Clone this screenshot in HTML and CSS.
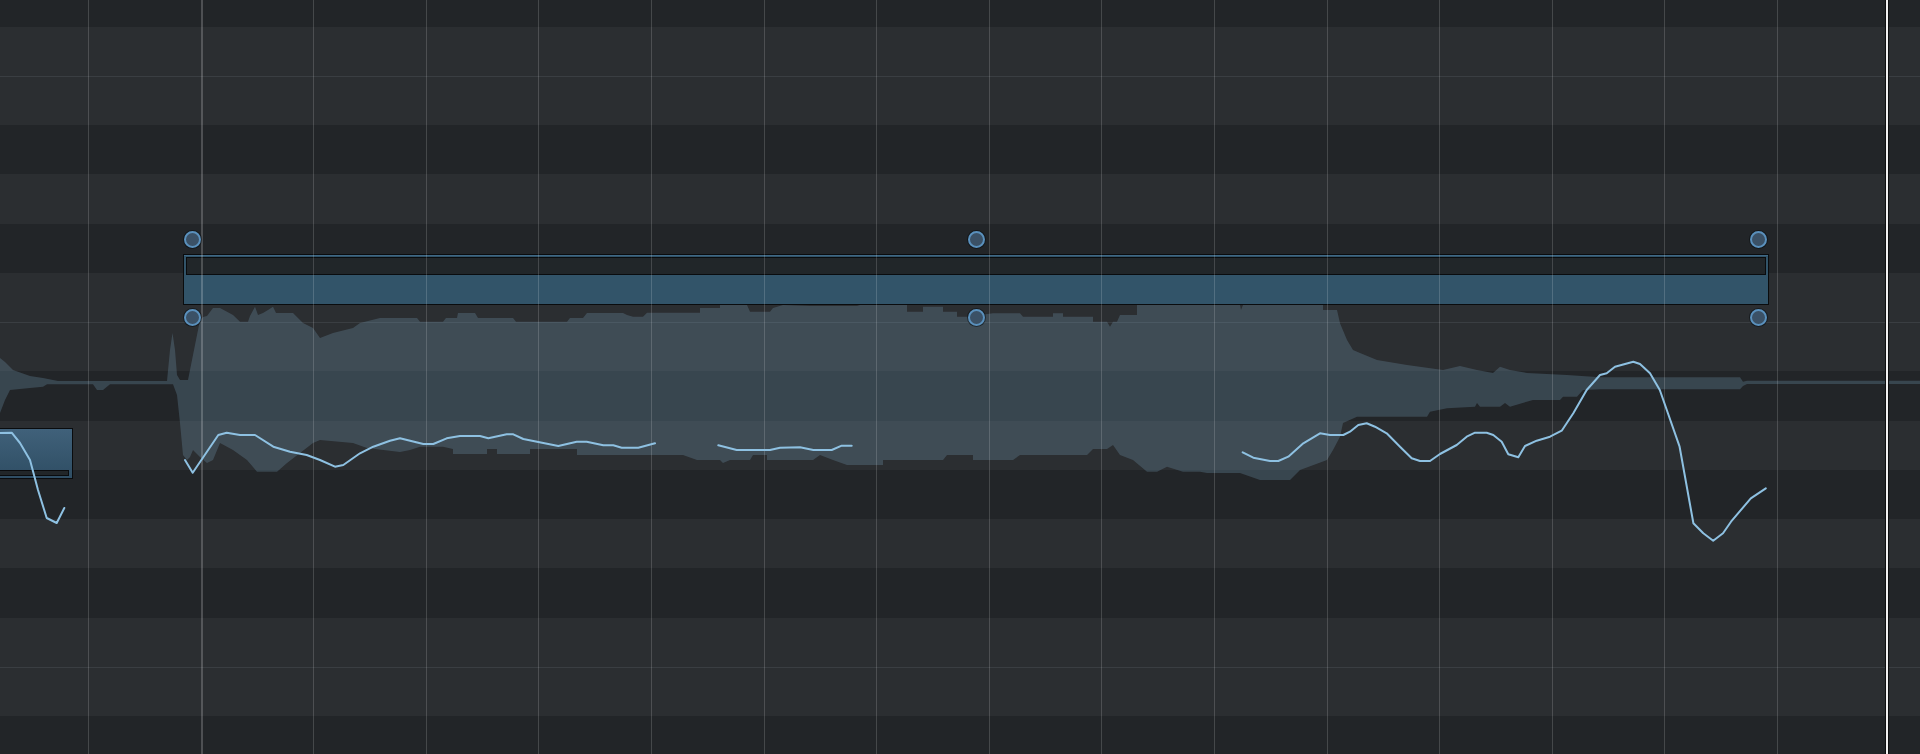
FILE: index.html
```html
<!DOCTYPE html>
<html>
<head>
<meta charset="utf-8">
<title>Pitch editor</title>
<link rel="stylesheet" href="styles.css">
</head>
<body>
<div class="editor">
  <div class="keys">
    <div class="row black first"></div>
    <div class="row white"></div>
    <div class="row white sep"></div>
    <div class="row black"></div>
    <div class="row white"></div>
    <div class="row black"></div>
    <div class="row white"></div>
    <div class="row white sep"></div>
    <div class="row black"></div>
    <div class="row white"></div>
    <div class="row black"></div>
    <div class="row white"></div>
    <div class="row black"></div>
    <div class="row white"></div>
    <div class="row white sep"></div>
    <div class="row black"></div>
  </div>

  <svg class="wave" viewBox="0 0 1920 754" width="1920" height="754">
    <polygon class="wave-fill" points="0,358 5,362 13,370 30,376 43,378 58,381 167,381 170,350 172.5,333 175,350 177,375 180,380 188,380 195,345 200,320 203,317 207,316 213,308 220,308 233,315 240,321.7 248,321.7 250,316 255,306.7 258,315 263,313 268,310 273,306.7 276,313 293,313 303,323 313,328 320,338 333,333 353,328 360,323 380,318 417,318 420,321.7 443,321.7 446,318 457,318 458,313 475,313 478,318 513,318 516,321.7 567,321.7 570,318 583,318 587,313 623,313 627,315 633,316.7 643,316.7 647,312.7 700,312.7 700,308 720,308 720,305 747,305 750,311.7 770,311.7 773,308 783,305 810,306 857,306 860,305 907,305 907,311.7 923,311.7 923,306.7 943,306.7 943,311.7 957,311.7 957,316.7 967,316.7 993,313.3 1020,313.3 1023,316.7 1053,316.7 1053,313.3 1063,313.3 1063,316.7 1093,316.7 1093,321.7 1107,321.7 1110,326.7 1113,321.7 1117,321.7 1120,315 1137,315 1137,305 1240,305 1241,310 1243,305 1323,305 1323,310 1337,310 1340,323.3 1347,340 1353,350 1360,353 1377,360 1407,365 1443,370 1460,366 1477,370 1493,373 1500,366.7 1510,370 1527,373 1567,375 1600,377.3 1740,377.3 1743,381.7 1747,380.7 1920,380.7 1920,384 1747,384 1743,386 1740,389.3 1600,389.3 1583,390 1577,396.7 1563,396.7 1560,400 1533,400 1510,406.7 1505,403 1500,406.7 1480,406.7 1477,403 1475,406.7 1447,408.3 1430,411.7 1427,416.7 1357,416.7 1343,423 1340,436.7 1333,450 1327,460 1300,470 1290,480 1260,480 1240,473 1207,473 1200,471.7 1183,471.7 1167,466.7 1157,471.7 1147,471.7 1133,460 1120,455 1113,445 1107,449 1093,449 1087,455 1020,455 1013,460 973,460 973,455 947,455 943,460 883,460 883,465 847,465 833,460 820,455 813,460 767,460 767,455 753,455 750,460 730,460 723,463 720,460 697,460 683,455 650,455 577,455 577,449 530,449 530,454 497,454 497,449 487,449 487,454 453,454 453,449 443,446.7 420,446.7 410,450 400,452 367,448 353,443 320,440 313,443 300,453 287,463 277,471.7 257,471.7 247,460 233,450 227,446.7 220,443 213,460 207,463 200,457 193,450 190,457 187,460 183,455 180,423 177,395 173,384.3 110,384.3 103,390 97,390 93,384.3 47,384.3 43,386.7 30,388 10,390 5,400 0,413"/>
  </svg>

  <div class="note note-main">
    <div class="note-bar"></div>
  </div>
  <div class="note note-left">
    <div class="note-bar"></div>
  </div>

  <div class="beats">
    <div class="beat"></div>
    <div class="beat bar"></div>
    <div class="beat"></div>
    <div class="beat"></div>
    <div class="beat"></div>
    <div class="beat"></div>
    <div class="beat"></div>
    <div class="beat"></div>
    <div class="beat"></div>
    <div class="beat"></div>
    <div class="beat"></div>
    <div class="beat"></div>
    <div class="beat"></div>
    <div class="beat"></div>
    <div class="beat"></div>
    <div class="beat"></div>
  </div>

  <svg class="pitch" viewBox="0 0 1920 754" width="1920" height="754">
    <polyline points="0,433 11.7,432.7 20,443 30,460 38,490 46.7,518 56.7,523 64.3,508"/>
    <polyline points="185,460 192.7,472.7 218.3,435 226.7,432.7 240,435 255,435 273.3,446.7 290,451.7 306.7,455 320,460 335,466.7 343.3,465 360,453.3 373.3,446.7 390,440.7 400,438.3 423.3,444 433.3,444 446.7,438.3 460,436 480,436 488.3,438.3 506.7,434.3 513.3,434.3 523.3,439 558.3,446 576.7,441.7 586.7,441.7 603.3,445.3 613.3,445.3 621.7,447.7 638.3,447.7 655,443.3"/>
    <polyline points="718.3,445.3 736.7,450 770,450 780,447.7 800,447.3 813.3,450 831.7,450 841.7,445.7 851.7,445.7"/>
    <polyline points="1242.7,452.3 1253.3,457.7 1270,461 1278.3,461 1288.3,456.7 1303.3,443.3 1320,433.3 1330,435 1343.3,435 1350,431.7 1358.3,425 1366.7,423.3 1375,426.7 1386.7,433.3 1400,446.7 1411.7,458.3 1420,461 1430,461 1440,454 1456.7,445 1466.7,436.7 1475,432.7 1486.7,432.7 1493.3,435 1501.7,441.7 1508.3,454.3 1518.3,457.3 1525,446 1536.7,440.7 1550,436.7 1561.7,430.7 1573.3,413.3 1586.7,390 1600,375 1606.7,373.3 1615,366.7 1633.3,361.7 1640,364 1650,373.3 1659.8,390 1679.6,446.7 1693.4,523.3 1703.3,533.3 1713.2,540.7 1723,533.3 1731,521.7 1750.8,498.3 1765.8,488.3"/>
  </svg>

  <div class="handle h-l-top"></div>
  <div class="handle h-l-bot"></div>
  <div class="handle h-m-top"></div>
  <div class="handle h-m-bot"></div>
  <div class="handle h-r-top"></div>
  <div class="handle h-r-bot"></div>

  <div class="playhead"></div>
</div>
</body>
</html>
```

FILE: styles.css
```css
html, body {
  margin: 0;
  padding: 0;
  background: #222528;
}

.editor {
  position: relative;
  width: 1920px;
  height: 754px;
  overflow: hidden;
  background: #222528;
}

/* piano-key rows */
.keys {
  display: flex;
  flex-direction: column;
}
.row {
  flex: 0 0 49.25px;
  box-sizing: border-box;
}
.row.first {
  flex-basis: 26.5px;
}
.row.black {
  background: #222528;
}
.row.white {
  background: #2b2e31;
}
.row.sep {
  border-top: 1px solid #3a3e42;
}

/* waveform */
.wave {
  position: absolute;
  left: 0;
  top: 0;
}
.wave-fill {
  fill: rgba(120, 160, 185, 0.27);
}

/* notes */
.note {
  position: absolute;
  box-sizing: border-box;
  border: 1px solid #0a0c0e;
  display: flex;
  flex-direction: column;
}
.note-bar {
  box-sizing: border-box;
  border: 1px solid #0a0c0e;
  background: #212629;
}
.note-main {
  left: 183px;
  top: 254px;
  width: 1586px;
  height: 51px;
  padding: 2px 2px 0 2px;
  background: #325469;
  box-shadow: inset 0 1px 0 #3f6885;
}
.note-main .note-bar {
  height: 18px;
}
.note-left {
  left: -20px;
  top: 428px;
  width: 93px;
  height: 51px;
  padding: 0 3px 2px 2px;
  justify-content: flex-end;
  background: linear-gradient(#40617a, #2f4e64);
}
.note-left .note-bar {
  height: 6px;
}

/* beat grid */
.beats {
  position: absolute;
  left: 0;
  top: 0;
  width: 1920px;
  height: 754px;
  display: flex;
  padding-left: 88px;
  box-sizing: border-box;
}
.beat {
  flex: 0 0 112.6px;
  box-sizing: border-box;
  border-left: 1px solid rgba(255, 255, 255, 0.16);
}
.beat.bar {
  border-left: 2px solid rgba(255, 255, 255, 0.2);
}

/* pitch curves */
.pitch {
  position: absolute;
  left: 0;
  top: 0;
}
.pitch polyline {
  fill: none;
  stroke: #8ec1e2;
  stroke-width: 2;
  stroke-linejoin: round;
  stroke-linecap: round;
}

/* handles */
.handle {
  position: absolute;
  width: 13px;
  height: 13px;
  border-radius: 50%;
  background: #3b5166;
  border: 2px solid #5a90bc;
  box-shadow: 0 0 0 1px rgba(8, 12, 16, 0.55);
}
.h-l-top { left: 184px; top: 231px; }
.h-l-bot { left: 184px; top: 309px; }
.h-m-top { left: 968px; top: 231px; }
.h-m-bot { left: 968px; top: 309px; }
.h-r-top { left: 1750px; top: 231px; }
.h-r-bot { left: 1750px; top: 309px; }

/* end marker */
.playhead {
  position: absolute;
  left: 1885px;
  top: 0;
  width: 2px;
  height: 754px;
  background: #f2f2f2;
  border-left: 1px solid #0e0f10;
  border-right: 1px solid #0e0f10;
}
```
